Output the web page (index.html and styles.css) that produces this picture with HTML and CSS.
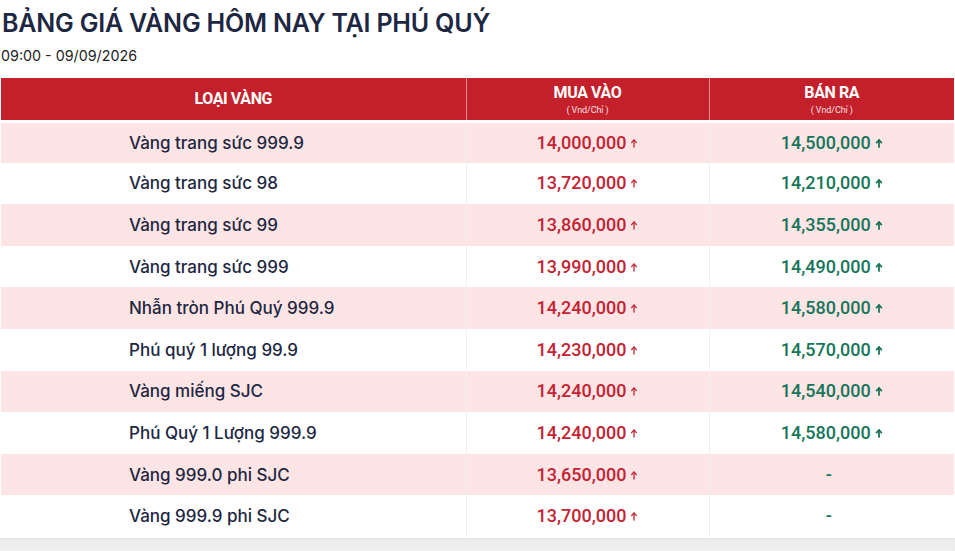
FILE: index.html
```html
<!DOCTYPE html>
<html lang="vi">
<head>
<meta charset="utf-8">
<title>Bảng giá vàng</title>
<link rel="stylesheet" href="styles.css">
</head>
<body>
<div class="page">
  <h1 class="title">BẢNG GIÁ VÀNG HÔM NAY TẠI PHÚ QUÝ</h1>
  <div class="date">09:00 - 09/09/2026</div>
  <div class="table-wrap">
    <table class="gold">
      <colgroup><col class="c1"><col class="c2"><col class="c3"></colgroup>
      <thead>
        <tr>
          <th>LOẠI VÀNG</th>
          <th class="two"><span>MUA VÀO</span><small>( Vnd/Chỉ )</small></th>
          <th class="two"><span>BÁN RA</span><small>( Vnd/Chỉ )</small></th>
        </tr>
      </thead>
      <tbody id="rows"></tbody>
    </table>
  </div>
  <div class="foot"></div>
</div>
<script src="app.js"></script>
</body>
</html>
```
FILE: app.js
```js
const data = [
  ["Vàng trang sức 999.9","14,000,000","14,500,000"],
  ["Vàng trang sức 98","13,720,000","14,210,000"],
  ["Vàng trang sức 99","13,860,000","14,355,000"],
  ["Vàng trang sức 999","13,990,000","14,490,000"],
  ["Nhẫn tròn Phú Quý 999.9","14,240,000","14,580,000"],
  ["Phú quý 1 lượng 99.9","14,230,000","14,570,000"],
  ["Vàng miếng SJC","14,240,000","14,540,000"],
  ["Phú Quý 1 Lượng 999.9","14,240,000","14,580,000"],
  ["Vàng 999.0 phi SJC","13,650,000",null],
  ["Vàng 999.9 phi SJC","13,700,000",null]
];
const arrow = cls => `<svg class="arr ${cls}" viewBox="0 0 8 10" width="8" height="10"><path d="M4 9V2.2" /><path d="M1.6 4.6L4 2L6.4 4.6" /></svg>`;
const tb = document.getElementById("rows");
tb.innerHTML = data.map(([n,b,s]) => `<tr>
  <td class="name">${n}</td>
  <td class="buy"><span class="val">${b}</span>${arrow("up-r")}</td>
  <td class="sell">${s ? `<span class="val">${s}</span>${arrow("up-g")}` : `<span class="dash">-</span>`}</td>
</tr>`).join("");
```
FILE: styles.css
```css
* { box-sizing: border-box; }
html, body { margin: 0; padding: 0; background: #fff; }
body { font-family: Inter, Roboto, "Noto Sans", Arial, sans-serif; color: #1c2540; }
.page { padding: 8px 1px 0 1px; }
.title {
  margin: 0 0 0 1px;
  font-family: Inter, Roboto, Arial, sans-serif;
  font-size: 25px;
  font-weight: 600;
  line-height: 30px;
  color: #1d2742;
  letter-spacing: -0.2px;
}
.date {
  margin-top: 9px;
  font-family: Inter, Roboto, Arial, sans-serif;
  font-size: 14.3px;
  line-height: 18px;
  color: #222;
}
.table-wrap {
  margin-top: 13px;
  width: 953px;
  border-right: 1px solid #e6e6e6;
}
.gold {
  width: 100%;
  border-collapse: collapse;
  table-layout: fixed;
}
.c1 { width: 465px; }
.c2 { width: 243px; }
.c3 { width: 245px; }
.gold thead th {
  background: #c4202b;
  color: #fff;
  height: 43px;
  font-family: Roboto, Arial, sans-serif;
  font-size: 16px;
  font-weight: 700;
  letter-spacing: -0.4px;
  text-align: center;
  vertical-align: middle;
  padding: 0;
  border-right: 1px solid #e88f93;
  border-bottom: 3px solid #fff;
}
.gold thead th:last-child { border-right: none; }
.gold thead th.two span { display: block; line-height: 18px; margin-top: 2px; }
.gold thead th.two small {
  display: block;
  font-size: 9px;
  font-weight: 400;
  line-height: 11px;
  margin-top: 3px;
  opacity: 0.85;
  letter-spacing: -0.1px;
}
.gold tbody tr { background: #fff; }
.gold tbody tr:nth-child(odd) { background: #fde4e5; }
.gold td {
  height: 41.6px;
  padding: 0;
  vertical-align: middle;
  font-size: 17px;
  font-weight: 500;
  border-right: 1px solid #f1eeee;
}
.gold td:last-child { border-right: none; }
.gold td.name { padding-left: 128px; color: #1d2742; }
.gold td.buy, .gold td.sell {
  text-align: center;
  font-family: Roboto, Arial, sans-serif;
  font-size: 18px;
  font-weight: 500;
  line-height: 20px;
}
.gold td.buy { color: #c42333; }
.gold td.sell { color: #17765a; }
.arr {
  display: inline-block;
  vertical-align: baseline;
  margin-left: 4px;
  margin-bottom: 1px;
  fill: none;
  stroke-width: 1.3;
  stroke-linecap: round;
  stroke-linejoin: round;
}
.up-r { stroke: #c42333; }
.up-g { stroke: #17765a; stroke-width: 1.8; }
.dash { color: #17765a; margin-left: -6px; }
.foot {
  height: 20px;
  margin: 1px -1px 0 -1px;
  border-top: 1px solid #e4e4e4;
  background: linear-gradient(#ebebeb, #f1f1f1);
}
```
